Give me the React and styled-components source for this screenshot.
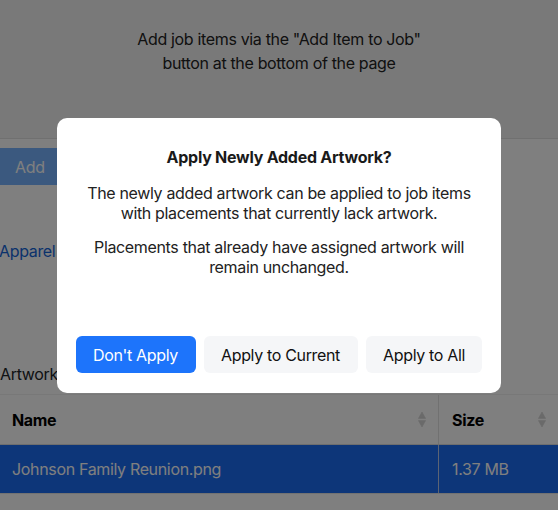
import React from "react";
import styled, { createGlobalStyle } from "styled-components";

const Global = createGlobalStyle`
  html, body { margin: 0; padding: 0; background: #fff; }
  body {
    font-family: Inter, "Noto Sans", "Liberation Sans", sans-serif;
    color: #212529;
    overflow: hidden;
    letter-spacing: -0.34px;
  }
  * { box-sizing: border-box; }
`;

const Page = styled.div`
  width: 558px;
  height: 510px;
  overflow: hidden;
  display: flex;
  flex-direction: column;
`;

const EmptyState = styled.div`
  height: 139px;
  background: #f3f3f3;
  border-bottom: 1px solid #e0e0e0;
  padding-top: 28px;
  text-align: center;
  font-size: 16px;
  line-height: 23.5px;
  color: #222;
`;

const Toolbar = styled.div`
  display: flex;
  padding-top: 9px;
`;

const AddButton = styled.button`
  border: none;
  background: #76b3ff;
  color: #fff;
  font: inherit;
  letter-spacing: inherit;
  font-size: 16px;
  height: 37px;
  padding: 0 60px 0 15px;
  border-radius: 0 6px 6px 0;
`;

const LinkRow = styled.div`
  margin-top: 56px;
  height: 20px;
  display: flex;
  align-items: center;
  margin-left: -1px;
`;

const Link = styled.a`
  color: #1565d8;
  font-size: 16px;
  text-decoration: none;
`;

const Label = styled.div`
  margin: 103px 0 10px;
  height: 20px;
  font-size: 16px;
  line-height: 20px;
  color: #212529;
`;

const Table = styled.div`
  border-top: 1px solid #f0f0f0;
`;

const Row = styled.div`
  display: grid;
  grid-template-columns: 439px 1fr;
  height: ${(p) => p.$h}px;
  background: ${(p) => (p.$selected ? "#1a6cf2" : "#fff")};
  border-bottom: 1px solid ${(p) => (p.$selected ? "#e4e4e4" : "#dcdcdc")};
`;

const Cell = styled.div`
  display: flex;
  align-items: center;
  justify-content: space-between;
  padding: 0 12px 0 ${(p) => (p.$first ? 12 : 13)}px;
  font-size: 16px;
  font-weight: ${(p) => (p.$head ? 700 : 400)};
  color: ${(p) => (p.$selected ? "#ffffff" : "#000")};
  border-right: ${(p) => (p.$first ? `1px solid ${p.$selected ? "#b8c8e8" : "#e2e2e2"}` : "none")};
`;

const SortIcon = () => (
  <svg width="8" height="17" viewBox="0 0 8 17">
    <path d="M4 1 L7.6 7.4 H0.4 Z" fill="#d4d4d4" stroke="#d4d4d4" strokeWidth="0.6" strokeLinejoin="round" />
    <path d="M4 16 L7.6 9.6 H0.4 Z" fill="#d4d4d4" stroke="#d4d4d4" strokeWidth="0.6" strokeLinejoin="round" />
  </svg>
);

const Overlay = styled.div`
  position: fixed;
  inset: 0;
  background: rgba(0, 0, 0, 0.5);
  display: flex;
  align-items: center;
  justify-content: center;
`;

const Dialog = styled.div`
  width: 444px;
  height: 275px;
  margin-top: 1px;
  background: #fff;
  border-radius: 10px;
  padding: 29px 20px 20px;
  display: flex;
  flex-direction: column;
  text-align: center;
`;

const Title = styled.div`
  font-size: 16px;
  font-weight: 700;
  line-height: 20px;
  letter-spacing: -0.25px;
  color: #1a1a1a;
`;

const Body = styled.p`
  margin: ${(p) => p.$mt}px 0 0;
  font-size: 16px;
  line-height: 20px;
  color: #222;
`;

const Footer = styled.div`
  margin-top: auto;
  display: flex;
  justify-content: center;
  gap: 8px;
`;

const Btn = styled.button`
  border: none;
  font: inherit;
  letter-spacing: inherit;
  font-size: 16px;
  height: 37px;
  padding: 0 17.5px;
  border-radius: 6px;
  background: ${(p) => (p.$primary ? "#1d74fb" : "#f5f6f8")};
  color: ${(p) => (p.$primary ? "#fff" : "#111")};
  white-space: nowrap;
`;

export default function App() {
  return (
    <>
      <Global />
      <Page>
        <EmptyState>
          Add job items via the "Add Item to Job"
          <br />
          button at the bottom of the page
        </EmptyState>
        <Toolbar>
          <AddButton>Add</AddButton>
        </Toolbar>
        <LinkRow>
          <Link href="#">Apparel</Link>
        </LinkRow>
        <Label>Artwork</Label>
        <Table>
          <Row $h={50}>
            <Cell $first $head>
              Name <SortIcon />
            </Cell>
            <Cell $head>
              Size <SortIcon />
            </Cell>
          </Row>
          <Row $h={49} $selected>
            <Cell $first $selected>Johnson Family Reunion.png</Cell>
            <Cell $selected>1.37 MB</Cell>
          </Row>
        </Table>
      </Page>
      <Overlay>
        <Dialog>
          <Title>Apply Newly Added Artwork?</Title>
          <Body $mt={16}>
            The newly added artwork can be applied to job items
            <br />
            with placements that currently lack artwork.
          </Body>
          <Body $mt={14}>
            Placements that already have assigned artwork will
            <br />
            remain unchanged.
          </Body>
          <Footer>
            <Btn $primary>Don't Apply</Btn>
            <Btn>Apply to Current</Btn>
            <Btn>Apply to All</Btn>
          </Footer>
        </Dialog>
      </Overlay>
    </>
  );
}
